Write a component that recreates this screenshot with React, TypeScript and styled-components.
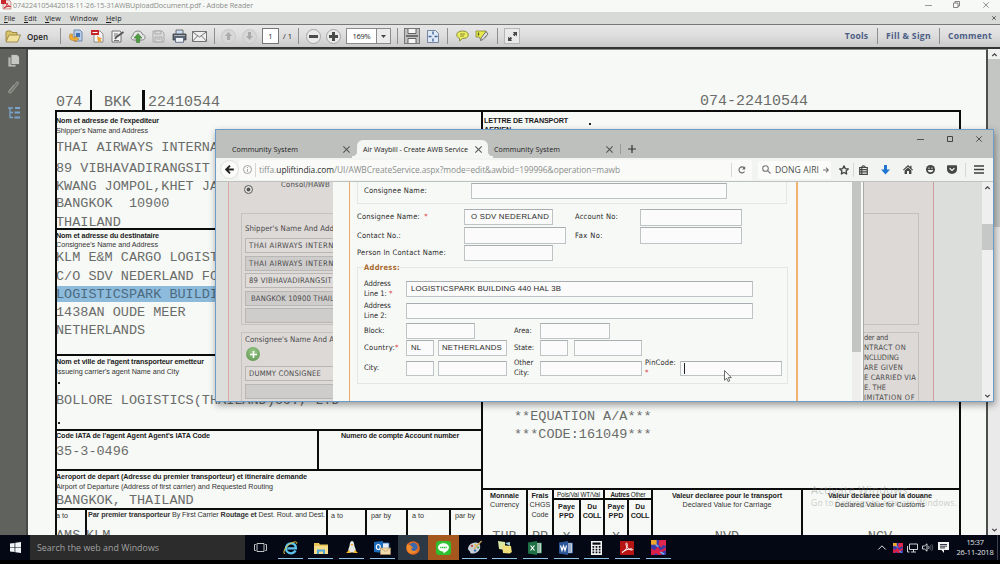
import React, { useLayoutEffect, useRef } from "react";
import styled, { createGlobalStyle, css } from "styled-components";

const paper = "#f7f9f6";
const ink = "#1c1c1c";
const sans = `"Liberation Sans", Arial, sans-serif`;
const ui = `"Open Sans", "Noto Sans", sans-serif`;
const form = `"DejaVu Sans Condensed", "DejaVu Sans", sans-serif`;
const mono = `"Liberation Mono", "Courier New", monospace`;

const GlobalStyle = createGlobalStyle`
  * { box-sizing: border-box; }
  body { margin: 0; background: #000; overflow: hidden; }
  svg { display: block; flex: none; overflow: visible; }
`;

const FitText = styled.span`
  display: inline-block;
  white-space: pre;
`;

/* Tracks the text so that it fills the given width. */
const Fit = ({ w, children }: { w: number; children: React.ReactNode }) => {
  const ref = useRef<HTMLSpanElement>(null);
  useLayoutEffect(() => {
    const el = ref.current;
    if (!el) return;
    el.style.letterSpacing = "0px";
    const natural = el.getBoundingClientRect().width;
    const count = (el.textContent || "").length || 1;
    el.style.letterSpacing = `${(w - natural) / count}px`;
  }, [w, children]);
  return <FitText ref={ref}>{children}</FitText>;
};

const Screen = styled.div`
  position: relative;
  display: flex;
  flex-direction: column;
  width: 1000px;
  height: 564px;
  overflow: hidden;
  background: #000;
  font-family: ${ui};
`;

/* ---------- reader window ---------- */

const TitleBar = styled.div`
  display: flex;
  align-items: center;
  height: 12px;
  flex: none;
  background: ${paper};
  color: #8b8d8b;
  font-size: 7.2px;
  line-height: 10px;
  padding-bottom: 3px;
`;

const TitleIcon = styled.div`
  width: 13px;
  padding-left: 1px;
`;

const Spacer = styled.div`
  flex: 1;
`;

const WindowButton = styled.div<{ $w: number }>`
  display: flex;
  justify-content: center;
  width: ${({ $w }) => $w}px;
`;

const MenuBar = styled.div`
  display: flex;
  align-items: center;
  height: 12px;
  flex: none;
  padding: 0 4px;
  background: #d8dad8;
  color: #1c1c1c;
  font-size: 7.2px;
`;

const MenuItem = styled.div<{ $w: number }>`
  width: ${({ $w }) => $w}px;
  line-height: 12px;

  &::first-letter {
    text-decoration: underline;
  }
`;

const ToolBar = styled.div`
  display: flex;
  align-items: center;
  height: 23px;
  flex: none;
  border-top: 1px solid #777977;
  background: linear-gradient(#e6e7e6, #dcdddc 50%, #c9cac9);
  color: #222;
`;

const Slot = styled.div<{ $w: number; $ml?: number }>`
  display: flex;
  align-items: center;
  justify-content: center;
  flex: none;
  width: ${({ $w }) => $w}px;
  margin-left: ${({ $ml }) => $ml || 0}px;
`;

const ToolDivider = styled.div<{ $ml?: number }>`
  width: 1px;
  height: 16px;
  flex: none;
  margin-left: ${({ $ml }) => $ml || 0}px;
  background: #8e908e;
`;

const OpenLabel = styled.div`
  width: 34px;
  padding-left: 1px;
  font-size: 8px;
  font-weight: 600;
`;

const PageField = styled.div`
  width: 17px;
  height: 16px;
  margin-left: 3px;
  border: 1px solid #777;
  background: #fff;
  font-size: 7.5px;
  line-height: 14px;
  text-align: center;
`;

const PageTotal = styled.div`
  width: 15px;
  margin-left: 4px;
  font-size: 7.5px;
`;

const ZoomField = styled.div`
  display: flex;
  width: 45px;
  height: 16px;
  margin-left: 2px;
  border: 1px solid #8a8c8a;
  background: #fff;
  font-size: 7.5px;
  line-height: 14px;
`;

const ZoomValue = styled.div`
  width: 30px;
  text-align: center;
  border-right: 1px solid #8a8c8a;
`;

const ZoomArrow = styled.div`
  display: flex;
  flex: 1;
  align-items: center;
  justify-content: center;
  background: #ececec;
`;

const RoundButton = styled.div<{ $dim?: boolean }>`
  display: flex;
  align-items: center;
  justify-content: center;
  width: 15px;
  height: 15px;
  border: 1px solid ${({ $dim }) => ($dim ? "#c8c9c8" : "#a4a6a4")};
  border-radius: 50%;
  background: ${({ $dim }) => ($dim ? "#d6d7d6" : "#e9eae9")};
  color: ${({ $dim }) => ($dim ? "#a9aba9" : "#4a4c4a")};
`;

const PressedFrame = styled.div<{ $dark?: boolean }>`
  display: flex;
  align-items: center;
  justify-content: center;
  width: 16px;
  height: 16px;
  border: 1px solid ${({ $dark }) => ($dark ? "#777" : "#b5b7b5")};
  background: ${({ $dark }) => ($dark ? "#bfc0bf" : "#e8e9e8")};
`;

const ToolLink = styled.div<{ $w: number }>`
  width: ${({ $w }) => $w}px;
  text-align: center;
  color: #4d5e86;
  font-size: 8.6px;
  font-weight: 700;
`;

const ReaderBody = styled.div`
  display: flex;
  flex: none;
  height: 488px;
  border-top: 2px solid #333533;
  background: ${paper};
`;

const NavPane = styled.div`
  display: flex;
  flex-direction: column;
  align-items: center;
  width: 28px;
  padding-top: 5px;
  gap: 12px;
  background: #60625e;
  border-right: 2px solid #484a47;
`;

const Sheet = styled.div`
  width: 960px;
  height: 486px;
  padding-left: 27px;
  border-top: 1px solid #8c8e8b;
  border-right: 2px solid #4c4e4c;
  overflow: hidden;
  background: ${paper};
`;

const ReaderScroll = styled.div`
  display: flex;
  flex-direction: column;
  align-items: center;
  justify-content: space-between;
  flex: 1;
  padding: 4px 0 3px 1px;
  background: linear-gradient(#f0f1f0 10px, #c4c6c4 10px, #c4c6c4 178px, #e9eae9 178px);
`;

/* ---------- air waybill ---------- */

const monoText = css`
  font-family: ${mono};
  font-size: 13.5px;
  line-height: 16px;
  color: #6a6c6a;
  white-space: pre;
`;

const WaybillHead = styled.div`
  display: flex;
  align-items: flex-end;
  height: 60px;
  padding-left: 1px;
`;

const WaybillNumber = styled.div<{ $w: number; $lift?: boolean }>`
  ${monoText}
  font-size: 15px;
  width: ${({ $w }) => $w}px;
  margin-bottom: ${({ $lift }) => ($lift ? 0 : -1)}px;
`;

const HeadBar = styled.div<{ $w: number; $mr: number }>`
  width: ${({ $w }) => $w}px;
  height: 20px;
  margin-right: ${({ $mr }) => $mr}px;
  background: #0c0c0c;
`;

const Waybill = styled.div`
  display: grid;
  grid-template-columns: 424px 1fr;
  width: 906px;
  height: 426px;
  border: 2px solid #0c0c0c;
  border-bottom: 0;
  overflow: hidden;
`;

const LeftColumn = styled.div`
  display: flex;
  flex-direction: column;
`;

const RightColumn = styled.div`
  display: flex;
  flex-direction: column;
  border-left: 2px solid #0c0c0c;
`;

const Cell = styled.div<{ $h?: number; $w?: number; $right?: boolean; $last?: boolean }>`
  ${({ $h }) => $h && `height: ${$h}px;`}
  ${({ $w }) => $w && `width: ${$w}px;`}
  flex: none;
  border-bottom: ${({ $last }) => ($last ? 0 : 2)}px solid #0c0c0c;
  border-right: ${({ $right }) => ($right ? 2 : 0)}px solid #0c0c0c;
`;

const CellRow = styled.div<{ $h: number }>`
  display: flex;
  height: ${({ $h }) => $h}px;
  flex: none;
`;

const Caption = styled.div<{ $bold?: boolean; $gap?: number; $pl?: number; $center?: boolean }>`
  height: 9px;
  margin-top: ${({ $gap }) => $gap || 0}px;
  margin-left: ${({ $pl, $center }) => ($center ? 0 : $pl || -1)}px;
  color: ${({ $bold }) => ($bold ? ink : "#343434")};
  font: ${({ $bold }) => ($bold ? 700 : 400)} 7.2px/9px ${sans};
  text-align: ${({ $center }) => ($center ? "center" : "left")};
  white-space: nowrap;
`;

const Typed = styled.div<{ $gap?: number; $pl?: number; $marked?: boolean; $center?: boolean }>`
  ${monoText}
  height: 16px;
  margin-top: ${({ $gap }) => $gap || 0}px;
  padding-top: 1px;
  padding-left: ${({ $pl }) => $pl || 0}px;
  text-align: ${({ $center }) => ($center ? "center" : "left")};
  text-indent: ${({ $pl, $center }) => ($pl || $center ? 0 : -1)}px;
  ${({ $marked }) => $marked && "background: #8dbbdc; color: #4c6a80;"}
`;

const SmallDot = styled.div<{ $gap: number; $ml: number }>`
  width: 2px;
  height: 2px;
  margin: ${({ $gap }) => $gap}px 0 0 ${({ $ml }) => $ml}px;
  background: #222;
`;

const SplitHead = styled.div`
  height: 10px;
  border-bottom: 2px solid #0c0c0c;
  padding-top: 1px;
  text-align: center;
  white-space: nowrap;
  color: ${ink};
  font: 6.3px/8px ${sans};
`;

const Bold = styled.b`
  font-weight: 700;
`;

const Watermark = styled.div`
  position: absolute;
  left: 811px;
  top: 482px;
  color: rgba(130, 134, 130, 0.42);
  font-size: 11px;
  line-height: 15px;
`;

const WatermarkNote = styled.div`
  font-size: 8.6px;
  line-height: 13px;
`;

/* ---------- browser window ---------- */

const Browser = styled.div`
  position: absolute;
  left: 215px;
  top: 129px;
  display: flex;
  flex-direction: column;
  width: 779px;
  height: 273px;
  border: 1px solid #6d9cc9;
  background: ${paper};
  box-shadow: 1px 3px 7px rgba(0, 0, 0, 0.38);
  overflow: hidden;
`;

const TabStrip = styled.div`
  display: flex;
  align-items: flex-end;
  height: 28px;
  flex: none;
  background: #bec0be;
  color: #222;
  font-size: 7.2px;
`;

const Tab = styled.div<{ $w: number; $pl: number; $pr: number; $active?: boolean }>`
  position: relative;
  display: flex;
  align-items: center;
  justify-content: space-between;
  width: ${({ $w }) => $w}px;
  height: 18px;
  padding: 0 ${({ $pr }) => $pr}px 0 ${({ $pl }) => $pl}px;
  ${({ $active }) =>
    $active &&
    css`
      background: #f4f6f3;
      border-radius: 6px 6px 0 0;

      &::before,
      &::after {
        content: "";
        position: absolute;
        bottom: 0;
        width: 5px;
        height: 7px;
      }
      &::before {
        left: -5px;
        background: radial-gradient(circle at 0 0, transparent 5px, #f4f6f3 5.5px);
      }
      &::after {
        right: -5px;
        background: radial-gradient(circle at 100% 0, transparent 5px, #f4f6f3 5.5px);
      }
    `}
`;

const TabDivider = styled.div`
  width: 1px;
  height: 10px;
  margin: 0 6px 4px 0;
  background: #999b99;
`;

const TabButtons = styled.div`
  display: flex;
  align-items: center;
  height: 18px;
  align-self: flex-start;
`;

const NavBar = styled.div`
  display: flex;
  align-items: center;
  height: 24px;
  flex: none;
  padding-left: 4px;
  border-bottom: 1px solid #bfc1bf;
  background: #f2f4f1;
  color: #454745;
`;

const BackButton = styled.div`
  display: flex;
  align-items: center;
  justify-content: center;
  width: 19px;
  height: 19px;
  border: 1px solid #e2e3e1;
  border-radius: 50%;
  background: #fbfcfa;
  color: #222;
`;

const UrlField = styled.div`
  display: flex;
  align-items: center;
  width: 513px;
  height: 20px;
  border-radius: 2px;
  background: #fafbf9;
  color: #8b8d8b;
  font-size: 8.4px;
`;

const UrlHost = styled.span`
  color: #2b2d2b;
`;

const UrlText = styled.div`
  padding-left: 3px;
`;

const ThinLine = styled.div<{ $ml?: number }>`
  width: 1px;
  height: 14px;
  margin-left: ${({ $ml }) => $ml || 0}px;
  background: #d6d8d6;
`;

const SearchField = styled.div`
  display: flex;
  align-items: center;
  width: 73px;
  height: 18px;
  margin-left: 6px;
  padding-left: 4px;
  gap: 4px;
  border-radius: 2px;
  background: #fbfcfa;
  color: #4c4e4c;
  font-size: 8.6px;
`;

const Viewport = styled.div`
  display: flex;
  height: 219px;
  overflow: hidden;
`;

const dimmed = css`
  background: #ddd9d7;
  color: #4a4a4a;
  font-family: ${form};
`;

const DimLeft = styled.div`
  width: 117px;
  flex: none;
  padding-left: 12px;
  background: #dcdedc;
`;

const DimLeftPage = styled.div`
  ${dimmed}
  height: 100%;
  padding-left: 12px;
  border-left: 1px solid #d9a9a9;
`;

const RadioRow = styled.div`
  display: flex;
  height: 31px;
  padding: 3px 0 0 3px;
  gap: 28px;
  font-size: 7.6px;
  line-height: 1;
`;

const RadioLabel = styled.div`
  margin-top: -4px;
`;

const Radio = styled.div`
  width: 9px;
  height: 9px;
  border: 1px solid #777;
  border-radius: 50%;
  background: #555;
  box-shadow: inset 0 0 0 1.5px #eceae8;
`;

const PartyBox = styled.div<{ $h: number; $mt?: number }>`
  height: ${({ $h }) => $h}px;
  margin-top: ${({ $mt }) => $mt || 0}px;
  padding: 0 0 0 3px;
  border: 1px solid #c5c2c0;
  border-right: 0;
  overflow: hidden;
`;

const PartyTitle = styled.div<{ $h: number; $pt: number }>`
  height: ${({ $h }) => $h}px;
  padding-top: ${({ $pt }) => $pt}px;
  font-size: 7.8px;
  line-height: 10px;
  white-space: nowrap;
`;

const PartyField = styled.div<{ $grey?: boolean; $pl?: number }>`
  height: 15px;
  margin-bottom: 2.5px;
  padding-left: ${({ $pl }) => $pl || 3}px;
  border: 1px solid #b9b7b5;
  border-right: 0;
  background: ${({ $grey }) => ($grey ? "#cfcdcc" : "#dedbd9")};
  font-size: 7.6px;
  line-height: 13px;
  white-space: nowrap;
  overflow: hidden;
`;

const AddButton = styled.div`
  display: flex;
  align-items: center;
  justify-content: center;
  width: 14px;
  height: 14px;
  margin: 0 0 5px 1px;
  border-radius: 50%;
  background: radial-gradient(circle at 50% 35%, #9cc98b, #569049);
`;

const Dialog = styled.div`
  display: flex;
  width: 530px;
  flex: none;
  padding-left: 16px;
  background: ${paper};
`;

const DialogForm = styled.div`
  width: 449px;
  padding: 0 7px;
  border-left: 1px solid #eba964;
  border-right: 2px solid #f2b26f;
  color: #2a2a2a;
  font-family: ${form};
  font-size: 7.5px;
`;

const DialogScroll = styled.div`
  width: 9px;
  margin-left: 54px;
  background: linear-gradient(#c3c5c3 170px, #eeefed 170px);
`;

const NameBox = styled.div`
  display: flex;
  height: 22px;
  width: 430px;
  padding: 1px 0 0 6px;
  border: 1px solid #e4e6e3;
  border-top: 0;
`;

const Row = styled.div<{ $h: number; $mt?: number }>`
  display: flex;
  align-items: center;
  height: ${({ $h }) => $h}px;
  margin-top: ${({ $mt }) => $mt || 0}px;
`;

const Label = styled.label<{ $w: number; $ml?: number }>`
  width: ${({ $w }) => $w}px;
  margin-left: ${({ $ml }) => $ml || 0}px;
  flex: none;
  line-height: 10px;
  white-space: pre;
`;

const Required = styled.span`
  color: #e0404a;
`;

const Field = styled.div<{ $w: number; $h?: number; $ml?: number; $pl?: number }>`
  width: ${({ $w }) => $w}px;
  height: ${({ $h }) => $h || 16}px;
  margin-left: ${({ $ml }) => $ml || 0}px;
  padding-left: ${({ $pl }) => $pl || 4}px;
  flex: none;
  border: 1px solid #bec3c6;
  border-top-color: #a9adb0;
  background: #fafbfa;
  font: 7.8px/14px ${sans};
  white-space: nowrap;
  overflow: hidden;
`;

const AddressSet = styled.fieldset`
  width: 431px;
  height: 122px;
  margin: 1px 0 0;
  padding: 0 0 0 6px;
  border: 1px solid #e4e6e3;
`;

const Legend = styled.legend`
  height: 10px;
  padding: 0;
  color: #a8682c;
  font-weight: 700;
  line-height: 11px;
`;

const Caret = styled.div`
  width: 1px;
  height: 11px;
  margin-top: 1px;
  margin-left: -1px;
  background: #222;
`;

const DimRight = styled.div`
  display: flex;
  flex: 1;
  background: #dcdedc;
  border-left: 1px solid #a9a9a8;
`;

const DimRightPage = styled.div`
  ${dimmed}
  width: 70px;
  padding-top: 31px;
  border-right: 1px solid #cf9fa0;
`;

const TermsBox = styled.div<{ $h: number; $mt?: number }>`
  width: 55px;
  height: ${({ $h }) => $h}px;
  margin-top: ${({ $mt }) => $mt || 0}px;
  border: 1px solid #c5bfbe;
  border-left: 0;
  font-size: 7.4px;
  line-height: 10px;
  white-space: nowrap;
  overflow: hidden;
`;

const PageScroll = styled.div`
  display: flex;
  flex-direction: column;
  align-items: center;
  justify-content: space-between;
  width: 11px;
  padding: 4px 0 3px;
  background: linear-gradient(#eeefee 42px, #c5c8c6 42px, #c5c8c6 68px, #eeefee 68px);
`;

const Pointer = styled.div`
  position: absolute;
  left: 724px;
  top: 370px;
`;

/* ---------- taskbar ---------- */

const TaskBar = styled.div`
  display: flex;
  align-items: stretch;
  height: 25px;
  flex: none;
  background: #030814;
`;

const StartButton = styled.div`
  display: flex;
  align-items: center;
  justify-content: center;
  width: 30px;
`;

const SearchBox = styled.div`
  width: 215px;
  padding-left: 7px;
  background: #2c2c2c;
  color: #a2a2a2;
  font-size: 8.8px;
  line-height: 26px;
`;

const TaskItem = styled.div<{ $w?: number; $bg?: string; $running?: boolean }>`
  display: flex;
  align-items: center;
  justify-content: center;
  width: ${({ $w }) => $w || 30.65}px;
  background: ${({ $bg }) => $bg || "transparent"};
  ${({ $running }) =>
    $running && "background: linear-gradient(#8fc3e6, #8fc3e6) center bottom 1px / 25px 1px no-repeat;"}
`;

const Clock = styled.div`
  width: 44px;
  color: #e6e6e6;
  font-size: 7.4px;
  line-height: 10px;
  padding-top: 2px;
  text-align: center;
`;

const TrayEnd = styled.div`
  width: 1px;
  margin-right: 2px;
  background: #3a3f4a;
`;

/* ---------- icons ---------- */

const Cross = ({ s = 6, c = "#555" }: { s?: number; c?: string }) => (
  <svg width={s} height={s} viewBox="0 0 6 6" stroke={c} strokeWidth=".9">
    <path d="M.3.3l5.4 5.4M5.7.3L.3 5.7" />
  </svg>
);

const Chevron = ({ up, c = "#444" }: { up?: boolean; c?: string }) => (
  <svg width="5" height="4" viewBox="0 0 5 4" fill="none" stroke={c} strokeWidth="1.2">
    <path d={up ? "M.3 3L2.5.8 4.7 3" : "M.3.8L2.5 3 4.7.8"} />
  </svg>
);

const PdfIcon = () => (
  <svg width="10" height="9" viewBox="0 0 10 9">
    <path d="M2 0h6l2 2v7H2z" fill="#f3dede" stroke="#b45555" strokeWidth=".6" />
    <path d="M0 0h5v4H0z" fill="#c8272c" />
    <path d="M3 8c3-1 3-4 3-5 0 2 1 3 3.500 3.500C7 6 5 6.500 3 8z" fill="none" stroke="#c8272c" />
  </svg>
);

const FolderIcon = () => (
  <svg width="16" height="13" viewBox="0 0 16 13" stroke="#8d7c3a" strokeWidth=".8">
    <path d="M1 11V2l1-1h4l1 1.500h5V6" fill="#d9c469" />
    <path d="M1 12L4 5h11.500l-3 7z" fill="#f0e29c" />
  </svg>
);

const ExportIcon = () => (
  <svg width="15" height="14" viewBox="0 0 15 14">
    <path d="M6 1h6l2 2v9H6z" fill="#b9d0ea" stroke="#5573a0" strokeWidth=".8" />
    <path d="M8 4h4v4H8z" fill="#3f71b5" />
    <path d="M2 5c-2 5 1 7 5 6.500V13l4-3-4-3v2C5 9 4 8 4.500 5z" fill="#f0ad35" stroke="#a9742a" strokeWidth=".5" />
  </svg>
);

const CreatePdfIcon = () => (
  <svg width="14" height="14" viewBox="0 0 14 14">
    <path d="M4 2h6l3 3v8H4z" fill="#f5f5f5" stroke="#777" strokeWidth=".8" />
    <path d="M1 1h8v5H1z" fill="#c8252b" />
    <path d="M2.500 3.500h5" stroke="#fff" strokeWidth="1" />
    <path d="M7 7l5 2.500-1.500 1L12 13l-2-.5L8 13z" fill="#eda437" />
  </svg>
);

const SignIcon = () => (
  <svg width="14" height="13" viewBox="0 0 14 13" fill="none" stroke="#666" strokeWidth=".9">
    <path d="M1 1h8l1 1v10H1z" fill="#f3f3f3" />
    <path d="M4 9l1.500-2L12.500 2" stroke="#555" strokeWidth="1.800" />
    <path d="M3 4h4M3 6h3M3 10.500h5" />
  </svg>
);

const CloudIcon = () => (
  <svg width="16" height="13" viewBox="0 0 16 13">
    <path d="M4 10C1 10 0 7 3 5.500 3 3 5 1 8 1c2.500 0 4 1.500 4.500 3.500C16 5 16 10 12 10z" fill="#e6e7e6" stroke="#777" strokeWidth=".9" />
    <path d="M8 3.500L4 8h2.300v4.500h3.400V8H12z" fill="#4f9f42" stroke="#2f6b28" strokeWidth=".5" />
  </svg>
);

const SaveIcon = () => (
  <svg width="13" height="13" viewBox="0 0 13 13" fill="#dadbda" stroke="#a9aba9">
    <path d="M1 1h9l2 2v9H1z" />
    <path d="M3 1h6v3H3zM3 7h7v5H3zM4.500 9h4" />
  </svg>
);

const PrintIcon = () => (
  <svg width="15" height="14" viewBox="0 0 15 14">
    <path d="M4 1h7v5H4z" fill="#c9dcf0" stroke="#555" strokeWidth=".8" />
    <path d="M1 5h13v6H1z" fill="#5c646d" stroke="#363b41" strokeWidth=".8" />
    <path d="M2 6.500h11" stroke="#a9b0b8" />
    <path d="M3.500 8.500h8v4.800h-8z" fill="#eef2f6" stroke="#4c5a78" strokeWidth=".8" />
  </svg>
);

const MailIcon = () => (
  <svg width="15" height="11" viewBox="0 0 15 11" fill="#eeefee" stroke="#666" strokeWidth=".9">
    <path d="M.5.500h14v10H.5z" />
    <path d="M.5.800L7.500 6l7-5.200M.5 10.200L5.500 5M14.500 10.200L9.500 5" fill="none" />
  </svg>
);

const ArrowGlyph = ({ down }: { down?: boolean }) => (
  <svg width="7" height="8" viewBox="0 0 7 8" fill="currentColor">
    <path d={down ? "M3.500 8L7 4H5V0H2v4H0z" : "M3.500 0L7 4H5v4H2V4H0z"} />
  </svg>
);

const SignGlyph = ({ plus }: { plus?: boolean }) => (
  <svg width="9" height="9" viewBox="0 0 9 9" fill="currentColor">
    <path d="M0 3h9v3H0z" />
    {plus && <path d="M3 0h3v9H3z" />}
  </svg>
);

const ScrollPageIcon = () => (
  <svg width="12" height="14" viewBox="0 0 12 14" fill="#f6f6f6" stroke="#555" strokeWidth=".9">
    <path d="M2 0v4.500h8V0M2 14V9.500h8V14" />
    <path d="M0 7h12" strokeWidth="1.500" />
  </svg>
);

const FitPageIcon = () => (
  <svg width="12" height="13" viewBox="0 0 12 13">
    <path d="M.5.500h8l3 3v9H.5z" fill="#dfe9f5" stroke="#5d6f8a" strokeWidth=".8" />
    <path d="M6 1.500v3M6 8.500v3M1.500 6.500h3M7.500 6.500h3" stroke="#41639a" strokeWidth="1.400" />
  </svg>
);

const BubbleIcon = () => (
  <svg width="13" height="12" viewBox="0 0 13 12">
    <path d="M6.500 1C10 1 12.300 2.500 12.300 5S10 8.500 6.500 8.500L3.500 11V8.200C1.500 7.500.7 6.500.7 5 .7 2.500 3 1 6.500 1z" fill="#ecec62" stroke="#85853a" strokeWidth=".9" />
    <path d="M4 4h5M4 6h4" stroke="#75752f" strokeWidth=".8" />
  </svg>
);

const HighlightIcon = () => (
  <svg width="14" height="12" viewBox="0 0 14 12">
    <path d="M1 1h10v6H8l-2 3-2-3H1z" fill="#e7e94c" stroke="#777b28" strokeWidth=".7" />
    <path d="M3.500 2.500v3" stroke="#55581c" strokeWidth="1.300" />
    <path d="M11 1.500L13 4 8 9.500 5.500 10.500 6 8z" fill="#dcdddc" stroke="#666" strokeWidth=".9" />
  </svg>
);

const ExpandIcon = () => (
  <svg width="11" height="11" viewBox="0 0 11 11" fill="#4a4a4a">
    <path d="M5.800 1H10v4.200L8.700 3.900 7.400 5.200 5.800 3.600l1.300-1.300zM5.200 10H1V5.800l1.300 1.300 1.300-1.300 1.600 1.600-1.300 1.300z" />
  </svg>
);

const PagesIcon = () => (
  <svg width="13" height="14" viewBox="0 0 13 14" fill="#b9bbb8" stroke="#60625e" strokeWidth=".8">
    <path d="M1 3h8v10H1z" />
    <path d="M4 .5h6l2.500 2.500v7.500H4z" fill="#c6c8c5" />
  </svg>
);

const ClipIcon = () => (
  <svg width="12" height="15" viewBox="0 0 12 15" fill="none" stroke="#93958f" strokeWidth="1.200">
    <path d="M2 12l8-10c1.500 0 1.500 1 1 2L4.500 12c-1 1.500-3.500 1-2.500-1l5-6" />
  </svg>
);

const TreeIcon = () => (
  <svg width="13" height="12" viewBox="0 0 13 12" fill="none" stroke="#7ba3cc" strokeWidth="1.300">
    <path d="M1 1h5M3 1v10M3 5.500h3M3 10.500h3" />
    <path d="M8 1h5M7.500 5.500H13M7.500 10.500H13" strokeWidth="2" />
  </svg>
);

const BackArrow = () => (
  <svg width="9" height="9" viewBox="0 0 9 9" fill="none" stroke="currentColor" strokeWidth="1.900">
    <path d="M8.800 4.500H1.500M5 .7L1.200 4.500 5 8.300" />
  </svg>
);

const InfoIcon = () => (
  <svg width="9" height="9" viewBox="0 0 9 9" fill="none" stroke="#8b8d8b" strokeWidth=".8">
    <circle cx="4.500" cy="4.500" r="4" />
    <path d="M4.500 4v2.800M4.500 2v1" />
  </svg>
);

const ReloadIcon = () => (
  <svg width="8" height="8" viewBox="0 0 8 8" fill="none" stroke="#666" strokeWidth="1.100">
    <path d="M6.500 5.500A3 3 0 1 1 6.300 2" />
    <path d="M7.200.3v3.200H4z" fill="#666" stroke="none" />
  </svg>
);

const SearchIcon = () => (
  <svg width="9" height="9" viewBox="0 0 9 9" fill="none" stroke="#777" strokeWidth="1.100">
    <circle cx="3.500" cy="3.500" r="2.800" />
    <path d="M5.600 5.600L8.500 8.500" />
  </svg>
);

const GoArrow = () => (
  <svg width="6" height="6" viewBox="0 0 6 6" fill="none" stroke="#777" strokeWidth="1.100">
    <path d="M0 3h5M3 .7L5.300 3 3 5.300" />
  </svg>
);

const StarIcon = () => (
  <svg width="10" height="10" viewBox="0 0 24 24" fill="none" stroke="#3f413f" strokeWidth="3" strokeLinejoin="round">
    <path d="M12 2l3 6.700 7.300.8-5.400 4.900 1.500 7.200L12 18l-6.400 3.600 1.500-7.200L1.700 9.500 9 8.700z" />
  </svg>
);

const ClipboardIcon = () => (
  <svg width="9" height="10" viewBox="0 0 9 10" fill="none" stroke="#454745" strokeWidth="1.200">
    <path d="M.7 2.500h7.600v6.800H.7zM2.800 2.200C2.800.300 6.200.300 6.200 2.200M.7 4.600h7.600M.7 6.900h7.600M2.800 2.500v6.500" />
  </svg>
);

const DownloadIcon = () => (
  <svg width="9" height="10" viewBox="0 0 9 10" fill="#1f76d2">
    <path d="M3 0h3v4.500h3L4.500 9.500 0 4.500h3z" />
  </svg>
);

const HomeIcon = () => (
  <svg width="10" height="9" viewBox="0 0 10 9" fill="#454745">
    <path d="M5 0L0 4.800l.7.800L5 1.700l4.300 3.900.7-.8-1.500-1.500V.8H7.200v1.300z" />
    <path d="M1.600 5.600L5 2.600l3.400 3V9H6V6H4v3H1.600z" />
  </svg>
);

const SmileIcon = () => (
  <svg width="9" height="9" viewBox="0 0 9 9">
    <circle cx="4.500" cy="4.500" r="4.500" fill="#454745" />
    <path d="M1.800 5h5.400c-.3 3-5.100 3-5.400 0z" fill="#f2f4f1" />
    <path d="M2.300 3.200h1.400M5.300 3.200h1.400" stroke="#f2f4f1" strokeWidth="1" />
  </svg>
);

const PocketIcon = () => (
  <svg width="10" height="9" viewBox="0 0 10 9">
    <path d="M1 .2h8c.6 0 1 .4 1 1V4c0 6.500-10 6.500-10 0V1.200c0-.6.400-1 1-1z" fill="#454745" />
    <path d="M2.600 3.200L5 5.400l2.400-2.200" fill="none" stroke="#f2f4f1" strokeWidth="1.300" />
  </svg>
);

const MenuIcon = () => (
  <svg width="10" height="9" viewBox="0 0 10 9" stroke="#3d3f3d" strokeWidth="1.500">
    <path d="M0 1h10M0 4.500h10M0 8h10" />
  </svg>
);

const PointerIcon = () => (
  <svg width="8" height="12" viewBox="0 0 8 12" fill="#fff" stroke="#444" strokeWidth=".8">
    <path d="M.5.500v9.700l2.200-2 1.500 3.300 1.600-.7-1.500-3.200h3z" />
  </svg>
);

const StartIcon = () => (
  <svg width="11" height="11" viewBox="0 0 11 11" fill="#f0f3f5">
    <path d="M0 1.600L4.600.9V5.200H0zM5.300.8L11 0v5.200H5.300zM0 5.800h4.600v4.300L0 9.400zM5.300 5.800H11V11l-5.700-.8z" />
  </svg>
);

const TaskViewIcon = () => (
  <svg width="13" height="9" viewBox="0 0 13 9" fill="none" stroke="#d4d6d8" strokeWidth=".9">
    <path d="M3 .5h7v8H3zM1.800 1.500H.5v6h1.300M11.200 1.500h1.300v6h-1.300" />
  </svg>
);

const EdgeIcon = () => (
  <svg width="15" height="14" viewBox="0 0 15 14" fill="none">
    <path d="M12.500 9.500C11.500 11.500 10 12.300 8 12.300 5 12.300 3 10 3 7.300S5 2.300 8 2.300c3 0 4.900 2 4.900 5H4.500" stroke="#5cc3ef" strokeWidth="2.300" />
    <path d="M1.500 13C-1 10 5 1.500 12.500.8c1.500 0 1.500 1.200 1 2" stroke="#e9cf4b" strokeWidth="1" />
  </svg>
);

const ExplorerIcon = () => (
  <svg width="14" height="12" viewBox="0 0 14 12">
    <path d="M0 1h5l1 1.500h8V12H0z" fill="#e9c55a" />
    <path d="M0 4h14v8H0z" fill="#f6dd8c" />
    <path d="M3 12V7.500h8V12H9V9.500H5V12z" fill="#4fa8d8" />
  </svg>
);

const ConeIcon = () => (
  <svg width="12" height="13" viewBox="0 0 12 13">
    <path d="M6 0c2.500 0 1.800 4 3 6.500 1 2 1 4 0 5H3c-1-1-1-3 0-5C4.200 4 3.500 0 6 0z" fill="#e9e9e4" />
    <path d="M4.500 3h3L6 5z" fill="#e8a82c" />
    <path d="M0 12l3-3 2 3zM12 12L9 9l-2 3z" fill="#f0b62f" />
  </svg>
);

const OutlookIcon = () => (
  <svg width="17" height="14" viewBox="0 0 17 14">
    <path d="M6 2h9v7H6z" fill="#e4eefa" stroke="#2f74bd" strokeWidth=".8" />
    <path d="M0 1l9-1v12l-9-1z" fill="#1c6bba" />
    <ellipse cx="4.300" cy="6" rx="2" ry="2.500" fill="none" stroke="#fff" strokeWidth="1.200" />
    <path d="M6.500 7h10v6.500h-10z" fill="#f1dcb0" stroke="#b5905a" strokeWidth=".6" />
    <path d="M6.500 7l5 3.500 5-3.500" fill="none" stroke="#b5905a" strokeWidth=".7" />
  </svg>
);

const FirefoxIcon = () => (
  <svg width="14" height="14" viewBox="0 0 14 14">
    <circle cx="7" cy="7" r="6.800" fill="#e2671f" />
    <circle cx="7.300" cy="6" r="4.300" fill="#3c68ae" />
    <path d="M1 3c1 1 2 1 3 1l3 2.500c-1 1-2.500 1-1.500 2.500 2 2 5 1 6-1.500-.5 3.500-3 5-5.500 5C2 12.500-.5 8 1 3z" fill="#f08a2a" />
  </svg>
);

const LineIcon = () => (
  <svg width="15" height="14" viewBox="0 0 15 14">
    <rect width="15" height="14" rx="3" fill="#2fc02f" />
    <path d="M7.500 2.200c3.300 0 5.500 1.900 5.500 4.300 0 2.200-2.500 4.200-5.500 5.900V10.600C4.300 10.500 2 8.800 2 6.500s2.200-4.300 5.500-4.300z" fill="#fff" />
    <path d="M4.200 6.500h6.600" fill="none" stroke="#2fc02f" strokeWidth="1.600" strokeDasharray="1.300 .5" />
  </svg>
);

const PaintIcon = () => (
  <svg width="15" height="13" viewBox="0 0 15 13">
    <path d="M8 1.500c4-.5 6 2.500 5 6s-5 5.500-8.500 5c-2-.5-1-2-2.500-3-2.500-1.500 0-7.500 6-8z" fill="#c4d0d6" />
    <circle cx="5" cy="5" r="1.200" fill="#c9503d" />
    <circle cx="8.500" cy="4" r="1.100" fill="#e4bb3c" />
    <circle cx="11" cy="6.500" r="1.100" fill="#4a9f59" />
    <circle cx="8" cy="9.500" r="1.200" fill="#3f72b8" />
    <path d="M14.500 0L7 8" stroke="#d9a85b" strokeWidth="1.200" />
  </svg>
);

const NotesIcon = () => (
  <svg width="15" height="13" viewBox="0 0 15 13">
    <path d="M1 0l7 1v8L2 8z" fill="#d8e8a0" />
    <path d="M5 4l9 1 .8 6-2 1.500L6 12z" fill="#efe07b" />
    <path d="M8 2l5-1v4z" fill="#9fd0d8" />
  </svg>
);

const OfficeIcon = ({ sheet, c }: { sheet?: boolean; c: string }) => (
  <svg width="14" height="14" viewBox="0 0 14 14">
    <path d="M7 2h6.500v10H7z" fill="#f3f5f4" stroke={c} strokeWidth=".8" />
    <path d="M9 4h3.500M9 6h3.500M9 8h3.500M9 10h3.500" stroke={c} strokeWidth=".9" />
    <path d="M0 1.500L9 0v14l-9-1.500z" fill={c} />
    <path
      d={sheet ? "M2.500 4.500l4 5M6.500 4.500l-4 5" : "M1.500 4.500l1.500 5 1.500-4.500L6 9.500l1.500-5"}
      fill="none"
      stroke="#fff"
      strokeWidth="1.200"
    />
  </svg>
);

const CalcIcon = () => (
  <svg width="11" height="14" viewBox="0 0 11 14">
    <path d="M0 0h11v14H0z" fill="#f3f3f3" />
    <path d="M1.500 1.500h8v2.200h-8z" fill="#05080f" />
    <path d="M1.500 5.800h8M1.500 8.600h8M1.500 11.400h8" stroke="#05080f" strokeWidth="1.700" strokeDasharray="1.700 1.450" />
  </svg>
);

const AcrobatIcon = () => (
  <svg width="14" height="14" viewBox="0 0 14 14">
    <rect width="14" height="14" rx="1" fill="#b81414" />
    <path d="M2 11.500c3.500-1.500 6-5.500 5-9-.8-1.200-1.500 0-.8 1.800C7 7 9 9 12 9c1 0 .8-1.300-.8-1.200C8 8 4 9.500 2 11.500z" fill="none" stroke="#fff" strokeWidth="1" />
  </svg>
);

const CollageIcon = ({ s = 16 }: { s?: number }) => (
  <svg width={s} height={s} viewBox="0 0 16 16">
    <path d="M0 0h16v16H0z" fill="#3b3aa8" />
    <path d="M0 0h6v5H0z" fill="#f0a92e" />
    <path d="M9 0h7v7l-3-2-2 3-3-3z" fill="#e0284e" />
    <path d="M0 16V9l4 2 3-4 3 4 6-3v3l-5 2v3H8l-3-2-2 2z" fill="#d81f4a" />
    <path d="M5 5l3 2M10 13l4 2" stroke="#7fb4f0" strokeWidth="1.500" />
  </svg>
);

const MonitorIcon = () => (
  <svg width="11" height="10" viewBox="0 0 11 10" fill="none" stroke="#e4e6e8" strokeWidth=".9">
    <path d="M2.500 1h8v5.500h-8zM6.500 6.500V9M4 9h5M.5 3v6h2" />
  </svg>
);

const SpeakerIcon = () => (
  <svg width="11" height="9" viewBox="0 0 11 9" fill="none" stroke="#e4e6e8" strokeWidth=".9">
    <path d="M.5 3h2L5 .8v7.400L2.500 6h-2z" />
    <path d="M6.500 3c.7 1 .7 2 0 3" />
    <path d="M8 2c1.300 1.600 1.300 3.400 0 5M9.500 1c1.700 2.200 1.700 4.800 0 7" stroke="#5b6069" />
  </svg>
);

const NoticeIcon = () => (
  <svg width="11" height="11" viewBox="0 0 11 11">
    <path d="M0 0h11v8H6v3L3.500 8H0z" fill="#f4f4f4" />
    <path d="M2 2.500h7M2 4.200h7M2 5.900h5" stroke="#030814" strokeWidth=".8" />
  </svg>
);

/* ---------- sections ---------- */

const ReaderHeader = () => (
  <>
    <TitleBar>
      <TitleIcon>
        <PdfIcon />
      </TitleIcon>
      <Fit w={240}>074224105442018-11-26-15-31AWBUploadDocument.pdf - Adobe Reader</Fit>
      <Spacer />
      <WindowButton $w={28}>
        <svg width="7" height="6" viewBox="0 0 7 6" stroke="#999"><path d="M0 3.500h7" /></svg>
      </WindowButton>
      <WindowButton $w={29}>
        <svg width="7" height="7" viewBox="0 0 7 7" fill="none" stroke="#777" strokeWidth=".9">
          <path d="M.5 2h4.500v4.500H.5zM2 2V.5h4.500V5H5" />
        </svg>
      </WindowButton>
      <WindowButton $w={29}>
        <Cross c="#888" />
      </WindowButton>
    </TitleBar>
    <MenuBar>
      <MenuItem $w={20}>File</MenuItem>
      <MenuItem $w={21}>Edit</MenuItem>
      <MenuItem $w={25}>View</MenuItem>
      <MenuItem $w={36}><Fit w={28}>Window</Fit></MenuItem>
      <MenuItem $w={20}>Help</MenuItem>
      <Spacer />
      <Cross s={4} c="#111" />
    </MenuBar>
    <ToolBar>
      <Slot $w={26}><FolderIcon /></Slot>
      <OpenLabel><Fit w={21}>Open</Fit></OpenLabel>
      <ToolDivider />
      <Slot $w={21} $ml={4}><ExportIcon /></Slot>
      <Slot $w={21}><CreatePdfIcon /></Slot>
      <Slot $w={21}><SignIcon /></Slot>
      <Slot $w={20}><CloudIcon /></Slot>
      <Slot $w={21}><SaveIcon /></Slot>
      <Slot $w={20}><PrintIcon /></Slot>
      <Slot $w={21}><MailIcon /></Slot>
      <ToolDivider $ml={4} />
      <Slot $w={21} $ml={3}><RoundButton $dim><ArrowGlyph /></RoundButton></Slot>
      <Slot $w={20}><RoundButton $dim><ArrowGlyph down /></RoundButton></Slot>
      <PageField>1</PageField>
      <PageTotal>/ 1</PageTotal>
      <ToolDivider />
      <Slot $w={20} $ml={4}><RoundButton><SignGlyph /></RoundButton></Slot>
      <Slot $w={21}><RoundButton><SignGlyph plus /></RoundButton></Slot>
      <ZoomField>
        <ZoomValue><Fit w={18}>169%</Fit></ZoomValue>
        <ZoomArrow>
          <svg width="5" height="3" viewBox="0 0 5 3"><path d="M0 0h5L2.500 3z" fill="#444" /></svg>
        </ZoomArrow>
      </ZoomField>
      <ToolDivider $ml={6} />
      <Slot $w={20} $ml={4}><PressedFrame $dark><ScrollPageIcon /></PressedFrame></Slot>
      <Slot $w={21}><FitPageIcon /></Slot>
      <ToolDivider $ml={4} />
      <Slot $w={20} $ml={4}><BubbleIcon /></Slot>
      <Slot $w={20}><HighlightIcon /></Slot>
      <ToolDivider $ml={5} />
      <Slot $w={20} $ml={4}><PressedFrame><ExpandIcon /></PressedFrame></Slot>
      <Spacer />
      <ToolLink $w={41}><Fit w={23.5}>Tools</Fit></ToolLink>
      <ToolDivider />
      <ToolLink $w={61}><Fit w={45}>Fill &amp; Sign</Fit></ToolLink>
      <ToolDivider />
      <ToolLink $w={60}><Fit w={44}>Comment</Fit></ToolLink>
    </ToolBar>
  </>
);

const ShipperCells = () => (
  <LeftColumn>
    <Cell $h={118}>
      <Caption $bold $gap={4}><Fit w={103}>Nom et adresse de l'expediteur</Fit></Caption>
      <Caption $gap={1}><Fit w={92}>Shipper's Name and Address</Fit></Caption>
      <Typed $gap={4}>THAI AIRWAYS INTERNATIONAL</Typed>
      <Typed $gap={5}>89 VIBHAVADIRANGSIT ROAD</Typed>
      <Typed $gap={2}>KWANG JOMPOL,KHET JATUJAK</Typed>
      <Typed $gap={1}>BANGKOK  10900</Typed>
      <Typed $gap={3}>THAILAND</Typed>
    </Cell>
    <Cell $h={126}>
      <Caption $bold $gap={1}><Fit w={103}>Nom et adresse du destinataire</Fit></Caption>
      <Caption><Fit w={102}>Consignee's Name and Address</Fit></Caption>
      <Typed>KLM E&amp;M CARGO LOGISTICS</Typed>
      <Typed $gap={3}>C/O SDV NEDERLAND FOR</Typed>
      <Typed $gap={2} $marked>LOGISTICSPARK BUILDING 440</Typed>
      <Typed $gap={2}>1438AN OUDE MEER</Typed>
      <Typed $gap={2}>NETHERLANDS</Typed>
    </Cell>
    <Cell $h={75}>
      <Caption $bold $gap={1}><Fit w={148}>Nom et ville de l'agent transporteur emetteur</Fit></Caption>
      <Caption $gap={1}><Fit w={123}>Issueing carrier's agent Name and City</Fit></Caption>
      <SmallDot $gap={6} $ml={1} />
      <Typed $gap={8}>BOLLORE LOGISTICS(THAILAND)CO., LTD</Typed>
      <SmallDot $gap={14} $ml={1} />
    </Cell>
    <CellRow $h={40}>
      <Cell $w={262} $right>
        <Caption $bold><Fit w={154}>Code IATA de l'agent Agent Agent's IATA Code</Fit></Caption>
        <Typed $gap={3}>35-3-0496</Typed>
      </Cell>
      <Cell $w={162}>
        <Caption $bold $center><Fit w={118}>Numero de compte Account number</Fit></Caption>
      </Cell>
    </CellRow>
    <Cell $h={39}>
      <Caption $bold $gap={1}><Fit w={251}>Aeroport de depart (Adresse du premier transporteur) et itineraire demande</Fit></Caption>
      <Caption $gap={1}><Fit w={217}>Airport of Departure (Address of first carrier) and Requested Routing</Fit></Caption>
      <Typed $gap={1}>BANGKOK, THAILAND</Typed>
    </Cell>
    <CellRow $h={30}>
      <Cell $w={30} $right $last>
        <Caption $gap={1}>a to</Caption>
        <Typed $gap={7}>AMS</Typed>
      </Cell>
      <Cell $w={241} $right $last>
        <Caption $gap={0} $pl={1}>
          <Fit w={237}><Bold>Par premier transporteur</Bold> By First Carrier <Bold>Routage et</Bold> Dest. Rout. and Dest.</Fit>
        </Caption>
        <Typed $gap={8}>KLM</Typed>
      </Cell>
      <Cell $w={39} $right $last><Caption $pl={3} $gap={1}>a to</Caption></Cell>
      <Cell $w={41} $right $last><Caption $pl={4} $gap={1}>par by</Caption></Cell>
      <Cell $w={43} $right $last><Caption $pl={4} $gap={1}>a to</Caption></Cell>
      <Cell $w={30} $last><Caption $pl={4} $gap={1}>par by</Caption></Cell>
    </CellRow>
  </LeftColumn>
);

const CarrierCells = () => (
  <RightColumn>
    <Cell $h={378}>
      <Caption $bold $gap={4} $pl={1}><Fit w={84}>LETTRE DE TRANSPORT</Fit></Caption>
      <SmallDot $gap={-2} $ml={106} />
      <Caption $bold $gap={0} $pl={1}>AERIEN</Caption>
      <Typed $gap={255} $pl={31}>COMPANY COMPANY</Typed>
      <Typed $gap={3} $pl={31}>**EQUATION A/A***</Typed>
      <Typed $gap={2} $pl={31}>***CODE:161049***</Typed>
    </Cell>
    <CellRow $h={46}>
      <Cell $w={45} $right $last>
        <Caption $bold $center $gap={1}><Fit w={29}>Monnaie</Fit></Caption>
        <Caption $center><Fit w={29}>Currency</Fit></Caption>
        <Typed $gap={19} $center>THB</Typed>
      </Cell>
      <Cell $w={26} $right $last>
        <Caption $bold $center $gap={1}>Frais</Caption>
        <Caption $center>CHGS</Caption>
        <Caption $center $gap={1}>Code</Caption>
        <Typed $gap={9} $center>PP</Typed>
      </Cell>
      <Cell $w={51} $right $last>
        <SplitHead><Fit w={43}>Pois/Val WT/Val</Fit></SplitHead>
        <CellRow $h={36}>
          <Cell $w={27} $right $last>
            <Caption $bold $center $gap={2}>Paye</Caption>
            <Caption $bold $center>PPD</Caption>
            <Typed $gap={9} $center>X</Typed>
          </Cell>
          <Cell $w={22} $last>
            <Caption $bold $center $gap={2}>Du</Caption>
            <Caption $bold $center><Fit w={18.5}>COLL</Fit></Caption>
          </Cell>
        </CellRow>
      </Cell>
      <Cell $w={48} $right $last>
        <SplitHead><Fit w={35}><Bold>Autres</Bold> Other</Fit></SplitHead>
        <CellRow $h={36}>
          <Cell $w={24} $right $last>
            <Caption $bold $center $gap={2}>Paye</Caption>
            <Caption $bold $center>PPD</Caption>
            <Typed $gap={9} $center>X</Typed>
          </Cell>
          <Cell $w={22} $last>
            <Caption $bold $center $gap={2}>Du</Caption>
            <Caption $bold $center><Fit w={18.5}>COLL</Fit></Caption>
          </Cell>
        </CellRow>
      </Cell>
      <Cell $w={150} $right $last>
        <Caption $bold $center $gap={1}><Fit w={110}>Valeur declaree pour le transport</Fit></Caption>
        <Caption $center><Fit w={89}>Declared Value for Carriage</Fit></Caption>
        <Typed $gap={19} $center>NVD</Typed>
      </Cell>
      <Cell $w={154} $last>
        <Caption $bold $center $gap={1}><Fit w={104}>Valeur declaree pour la douane</Fit></Caption>
        <Caption $center><Fit w={90}>Declared Value for Customs</Fit></Caption>
        <Typed $gap={19} $center>NCV</Typed>
      </Cell>
    </CellRow>
  </RightColumn>
);

const ReaderDocument = () => (
  <ReaderBody>
    <NavPane>
      <PagesIcon />
      <ClipIcon />
      <TreeIcon />
    </NavPane>
    <Sheet>
      <WaybillHead>
        <WaybillNumber $w={34}><Fit w={26}>074</Fit></WaybillNumber>
        <HeadBar $w={2} $mr={12} />
        <WaybillNumber $w={38}>BKK</WaybillNumber>
        <HeadBar $w={3} $mr={3} />
        <WaybillNumber $w={552}>22410544</WaybillNumber>
        <WaybillNumber $w={110} $lift>074-22410544</WaybillNumber>
      </WaybillHead>
      <Waybill>
        <ShipperCells />
        <CarrierCells />
      </Waybill>
    </Sheet>
    <ReaderScroll>
      <Chevron up />
      <Chevron />
    </ReaderScroll>
  </ReaderBody>
);

const terms = ["der and", "NTRACT ON", "NCLUDING", "ARE GIVEN", "E CARRIED VIA", "E. THE", "IMITATION OF"];
const termWidths = [24, 42, 35, 39, 52, 22, 51];

const ConsigneeForm = () => (
  <DialogForm>
    <NameBox>
      <Label $w={107}><Row $h={15}><Fit w={63}>Consignee Name:</Fit></Row></Label>
      <Field $w={256} />
    </NameBox>
    <Row $h={18} $mt={4}>
      <Label $w={107}><Fit w={63}>Consignee Name:</Fit>  <Required>*</Required></Label>
      <Field $w={89} $pl={6}><Fit w={78}>O SDV NEDERLAND</Fit></Field>
      <Label $w={65} $ml={22}><Fit w={43}>Account No:</Fit></Label>
      <Field $w={102} $h={17} />
    </Row>
    <Row $h={19}>
      <Label $w={107}><Fit w={44}>Contact No.:</Fit></Label>
      <Field $w={102} $h={17} />
      <Label $w={65} $ml={9}><Fit w={28}>Fax No:</Fit></Label>
      <Field $w={102} $h={17} />
    </Row>
    <Row $h={16}>
      <Label $w={107}><Fit w={89}>Person In Contact Name:</Fit></Label>
      <Field $w={89} />
    </Row>
    <AddressSet>
      <Legend><Fit w={36}>Address:</Fit></Legend>
      <Row $h={20} $mt={7}>
        <Label $w={42}>{"Address\nLine 1: "}<Required>*</Required></Label>
        <Field $w={347}><Fit w={150}>LOGISTICSPARK BUILDING 440 HAL 3B</Fit></Field>
      </Row>
      <Row $h={20} $mt={2}>
        <Label $w={42}>{"Address\nLine 2:"}</Label>
        <Field $w={347} />
      </Row>
      <Row $h={16} $mt={2}>
        <Label $w={42}>Block:</Label>
        <Field $w={69} />
        <Label $w={26} $ml={39}>Area:</Label>
        <Field $w={70} />
      </Row>
      <Row $h={16} $mt={1}>
        <Label $w={42}><Fit w={31}>Country:</Fit><Required>*</Required></Label>
        <Field $w={28}>NL</Field>
        <Field $w={69} $ml={4} $pl={3}><Fit w={60}>NETHERLANDS</Fit></Field>
        <Label $w={26} $ml={7}>State:</Label>
        <Field $w={28} />
        <Field $w={68} $ml={6} />
      </Row>
      <Row $h={20} $mt={2}>
        <Label $w={42}>City:</Label>
        <Field $w={28} $h={15} />
        <Field $w={69} $h={15} $ml={4} />
        <Label $w={26} $ml={7}>{"Other\nCity:"}</Label>
        <Field $w={102} $h={15} />
        <Label $w={35} $ml={3}><Fit w={31}>PinCode:</Fit>{"\n"}<Required>*</Required></Label>
        <Field $w={102} $h={15}><Caret /></Field>
      </Row>
    </AddressSet>
  </DialogForm>
);

const BrowserWindow = () => (
  <Browser>
    <TabStrip>
      <Tab $w={141} $pl={16} $pr={7}><Fit w={66}>Community System</Fit><Cross s={7} /></Tab>
      <Tab $w={131} $pl={6} $pr={6} $active><Fit w={105}>Air Waybill - Create AWB Service</Fit><Cross s={7} /></Tab>
      <Tab $w={132} $pl={6} $pr={7}><Fit w={66}>Community System</Fit><Cross s={7} /></Tab>
      <TabDivider />
      <Slot $w={9}>
        <svg width="8" height="18" viewBox="0 0 8 18" stroke="#333" strokeWidth="1.200"><path d="M4 5v8M0 9h8" /></svg>
      </Slot>
      <Spacer />
      <TabButtons>
        <WindowButton $w={29}>
          <svg width="7" height="6" viewBox="0 0 7 6" stroke="#555"><path d="M0 3.500h7" /></svg>
        </WindowButton>
        <WindowButton $w={29}>
          <svg width="6" height="6" viewBox="0 0 6 6" fill="none" stroke="#444"><path d="M.5.500h5v5h-5z" /></svg>
        </WindowButton>
        <WindowButton $w={29}><Cross c="#444" /></WindowButton>
      </TabButtons>
    </TabStrip>
    <NavBar>
      <BackButton><BackArrow /></BackButton>
      <UrlField>
        <Slot $w={16}><InfoIcon /></Slot>
        <ThinLine />
        <UrlText>
          <Fit w={361}>tiffa.<UrlHost>upliftindia.com</UrlHost>/UI/AWBCreateService.aspx?mode=edit&amp;awbid=199996&amp;operation=mawb</Fit>
        </UrlText>
        <Spacer />
        <ThinLine />
        <Slot $w={20}><ReloadIcon /></Slot>
      </UrlField>
      <SearchField><SearchIcon /><Fit w={44}>DONG AIRI</Fit><GoArrow /></SearchField>
      <Slot $w={18} $ml={4}><StarIcon /></Slot>
      <ThinLine />
      <Slot $w={18}><ClipboardIcon /></Slot>
      <Slot $w={18} $ml={4}><DownloadIcon /></Slot>
      <Slot $w={18} $ml={5}><HomeIcon /></Slot>
      <Slot $w={18} $ml={4}><SmileIcon /></Slot>
      <Slot $w={18} $ml={4}><PocketIcon /></Slot>
      <ThinLine $ml={4} />
      <Slot $w={18} $ml={4}><MenuIcon /></Slot>
    </NavBar>
    <Viewport>
      <DimLeft>
        <DimLeftPage>
          <RadioRow><Radio /><RadioLabel><Fit w={49}>Consol/HAWB</Fit></RadioLabel></RadioRow>
          <PartyBox $h={112}>
            <PartyTitle $h={24} $pt={10}><Fit w={89}>Shipper's Name And Add</Fit></PartyTitle>
            <PartyField><Fit w={90}>THAI AIRWAYS INTERNA</Fit></PartyField>
            <PartyField $grey><Fit w={90}>THAI AIRWAYS INTERNA</Fit></PartyField>
            <PartyField><Fit w={83}>89 VIBHAVADIRANGSIT</Fit></PartyField>
            <PartyField $grey $pl={5}><Fit w={83}>BANGKOK 10900 THAIL</Fit></PartyField>
            <PartyField $grey />
          </PartyBox>
          <PartyBox $h={80} $mt={7}>
            <PartyTitle $h={14} $pt={2}><Fit w={89}>Consignee's Name And A</Fit></PartyTitle>
            <AddButton>
              <svg width="7" height="7" viewBox="0 0 7 7" stroke="#fff" strokeWidth="1.500"><path d="M3.500 0v7M0 3.500h7" /></svg>
            </AddButton>
            <PartyField $pl={3}><Fit w={72}>DUMMY CONSIGNEE</Fit></PartyField>
            <PartyField $grey />
          </PartyBox>
        </DimLeftPage>
      </DimLeft>
      <Dialog>
        <ConsigneeForm />
        <DialogScroll />
      </Dialog>
      <DimRight>
        <DimRightPage>
          <TermsBox $h={112} />
          <TermsBox $h={80} $mt={7}>
            {terms.map((line, i) => (
              <div key={line}><Fit w={termWidths[i]}>{line}</Fit></div>
            ))}
          </TermsBox>
        </DimRightPage>
      </DimRight>
      <PageScroll>
        <Chevron up />
        <Chevron />
      </PageScroll>
    </Viewport>
  </Browser>
);

const Taskbar = () => (
  <TaskBar>
    <StartButton><StartIcon /></StartButton>
    <SearchBox><Fit w={122}>Search the web and Windows</Fit></SearchBox>
    <TaskItem $w={30}><TaskViewIcon /></TaskItem>
    <TaskItem $running><EdgeIcon /></TaskItem>
    <TaskItem $running><ExplorerIcon /></TaskItem>
    <TaskItem $running><ConeIcon /></TaskItem>
    <TaskItem $running><OutlookIcon /></TaskItem>
    <TaskItem $bg="#2c3843"><FirefoxIcon /></TaskItem>
    <TaskItem $bg="#a5581d"><LineIcon /></TaskItem>
    <TaskItem $running><PaintIcon /></TaskItem>
    <TaskItem $running><NotesIcon /></TaskItem>
    <TaskItem $running><OfficeIcon sheet c="#1f7145" /></TaskItem>
    <TaskItem $running><OfficeIcon c="#2a5699" /></TaskItem>
    <TaskItem $running><CalcIcon /></TaskItem>
    <TaskItem $running><AcrobatIcon /></TaskItem>
    <TaskItem $running><CollageIcon s={15} /></TaskItem>
    <Spacer />
    <TaskItem $w={16}>
      <svg width="8" height="5" viewBox="0 0 8 5" fill="none" stroke="#e4e6e8"><path d="M.3 4.500L4 .8l3.700 3.700" /></svg>
    </TaskItem>
    <TaskItem $w={15}><CollageIcon s={10} /></TaskItem>
    <TaskItem $w={15}><MonitorIcon /></TaskItem>
    <TaskItem $w={14}><SpeakerIcon /></TaskItem>
    <TaskItem $w={19}><NoticeIcon /></TaskItem>
    <Clock>
      <div><Fit w={17}>15:37</Fit></div>
      <div><Fit w={37}>26-11-2018</Fit></div>
    </Clock>
    <TrayEnd />
  </TaskBar>
);

const App = () => (
  <Screen>
    <GlobalStyle />
    <ReaderHeader />
    <ReaderDocument />
    <Taskbar />
    <Watermark>
      <Fit w={97}>Activate Windows</Fit>
      <WatermarkNote><Fit w={146}>Go to Settings to activate Windows.</Fit></WatermarkNote>
    </Watermark>
    <BrowserWindow />
    <Pointer><PointerIcon /></Pointer>
  </Screen>
);

export default App;
